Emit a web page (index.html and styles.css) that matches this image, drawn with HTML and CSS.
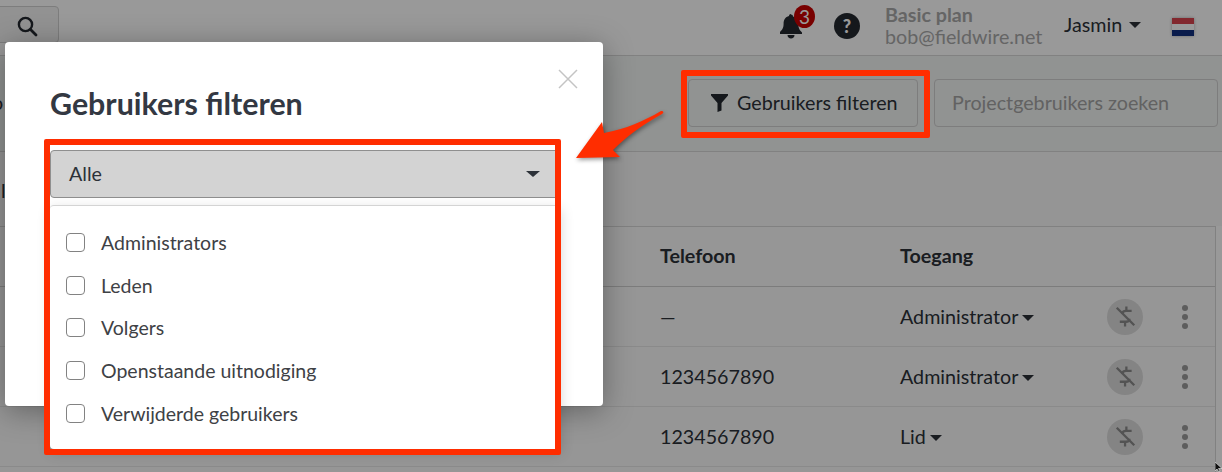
FILE: index.html
```html
<!DOCTYPE html>
<html lang="nl">
<head>
<meta charset="utf-8">
<title>Gebruikers filteren</title>
<link rel="stylesheet" href="styles.css">
</head>
<body>
<div class="page">
  <header class="topbar">
    <button class="search-btn" aria-label="Zoeken">
      <svg width="22" height="22" viewBox="0 0 22 22"><circle cx="9.5" cy="9.5" r="6.6" fill="none" stroke="#23282f" stroke-width="2.4"/><path d="M14.5 14.5 20 20" stroke="#23282f" stroke-width="2.8" stroke-linecap="round"/></svg>
    </button>
    <div class="top-right">
      <div class="bell">
        <svg width="24" height="26" viewBox="0 0 24 26"><path d="M12 1.5c1.2 0 2 .8 2 2 3.6.9 5.4 4 5.4 7.5 0 4.500 1.300 6 3.600 8.500v1.500H1V19c2.300-2.500 3.600-4 3.600-8.500 0-3.500 1.800-6.600 5.400-7.500 0-1.200.8-2 2-2Z" fill="#23282f"/><path d="M8.500 22h7c0 2-1.500 3.500-3.500 3.500S8.500 24 8.500 22Z" fill="#23282f"/></svg>
        <span class="badge">3</span>
      </div>
      <span class="help">?</span>
      <div class="plan"><strong>Basic plan</strong><span>bob@fieldwire.net</span></div>
      <div class="user">Jasmin <i class="caret"></i></div>
      <div class="flag"><i></i><i></i><i></i></div>
    </div>
  </header>
  <section class="toolbar">
    <span class="tab-edge">o</span>
    <button class="filter-btn">
      <svg width="17" height="18" viewBox="0 0 17 18"><path d="M0 0h17v1.500L10.500 9v7.500L6.500 18V9L0 1.500Z" fill="#23282f"/></svg>
      Gebruikers filteren
    </button>
    <div class="search-input">Projectgebruikers zoeken</div>
  </section>
  <div class="subhead">l</div>
  <section class="table">
    <div class="row head"><span></span><span>Telefoon</span><span>Toegang</span><span></span><span></span></div>
    <div class="row">
      <span></span><span>—</span><span class="access">Administrator<i class="caret"></i></span>
      <span class="nobill"><svg width="21" height="23" viewBox="0 0 24 26"><use href="#nodollar"/></svg></span><span class="more"><i></i><i></i><i></i></span>
    </div>
    <div class="row">
      <span></span><span>1234567890</span><span class="access">Administrator<i class="caret"></i></span>
      <span class="nobill"><svg width="21" height="23" viewBox="0 0 24 26"><use href="#nodollar"/></svg></span><span class="more"><i></i><i></i><i></i></span>
    </div>
    <div class="row">
      <span></span><span>1234567890</span><span class="access">Lid<i class="caret"></i></span>
      <span class="nobill"><svg width="21" height="23" viewBox="0 0 24 26"><use href="#nodollar"/></svg></span><span class="more"><i></i><i></i><i></i></span>
    </div>
  </section>
</div>

<svg class="defs" width="0" height="0"><defs>
  <g id="nodollar" fill="none" stroke="#8a8a8a" stroke-width="2.600">
    <path d="M2 3 22 23"/>
    <path d="M19 6.500h-6.500C10 6.500 8.500 8 8.500 10M5.500 19H12.500c2.500 0 4-1.500 4-3.500"/>
    <path d="M13 1.500v5M11.500 19v5.500"/>
  </g>
</defs></svg>

<div class="overlay"></div>

<div class="modal">
  <svg class="close" width="20" height="20" viewBox="0 0 20 20"><path d="M1 1 19 19M19 1 1 19" stroke="#c4c4c4" stroke-width="1.500"/></svg>
  <h2 class="modal-title">Gebruikers filteren</h2>
  <div class="select">
    <span>Alle</span><i class="caret"></i>
  </div>
  <ul class="menu">
    <li><i class="check"></i>Administrators</li>
    <li><i class="check"></i>Leden</li>
    <li><i class="check"></i>Volgers</li>
    <li><i class="check"></i>Openstaande uitnodiging</li>
    <li><i class="check"></i>Verwijderde gebruikers</li>
  </ul>
</div>

<div class="mark mark-button"></div>
<div class="mark mark-panel"></div>
<svg class="arrow" width="100" height="60" viewBox="570 105 100 60"><path d="M576 158 602 122l2 11c22-4 40-12 57-22 3 0 3 2 1 3-20 11-36 23-49 36l7 7Z" fill="#ff2d00"/></svg>
<svg class="cursor" width="8" height="10" viewBox="0 0 8 10"><path d="M0 0v9l2-2 2 3 1-1-1.500-2.500H7Z" fill="#111" stroke="#eee" stroke-width=".6"/></svg>
</body>
</html>
```
FILE: styles.css
```css
* { box-sizing: border-box; }
html, body { margin: 0; height: 100%; }
body {
  position: relative;
  width: 1222px;
  height: 472px;
  overflow: hidden;
  background: #fff;
  font-family: Lato, "Liberation Sans", sans-serif;
  font-size: 19.7px;
  color: #2c3138;
}
i { display: block; font-style: normal; }
button { font: inherit; color: inherit; background: none; }
.defs { position: absolute; }

.page { width: 1222px; height: 472px; display: flex; flex-direction: column; }

.topbar {
  height: 56px;
  flex: none;
  display: flex;
  align-items: flex-start;
  border-bottom: 1px solid #d8d8d8;
  background: #fff;
}
.search-btn {
  width: 60px;
  height: 37px;
  margin-top: 6px;
  margin-left: -1px;
  padding: 2px 0 0 16px;
  border: 1px solid #d0d0d0;
  border-radius: 0 4px 4px 0;
  background: #f3f3f3;
  display: flex;
  align-items: center;
}
.top-right { margin-left: auto; display: flex; align-items: flex-start; }
.bell { position: relative; width: 24px; height: 26px; margin: 13px 0 0; }
.bell svg { display: block; margin-left: -2px; }
.badge {
  position: absolute;
  left: 13px;
  top: -8px;
  width: 21px;
  height: 23px;
  border-radius: 50%;
  background: #c90000;
  color: #fff;
  font-size: 19px;
  line-height: 23px;
  text-align: center;
}
.help {
  width: 26px;
  height: 26px;
  margin: 13px 0 0 29px;
  border-radius: 50%;
  background: #23282f;
  color: #fff;
  font-size: 18px;
  font-weight: 900;
  line-height: 26px;
  text-align: center;
}
.plan {
  width: 179px;
  margin: 4px 0 0 25px;
  display: flex;
  flex-direction: column;
  color: #a9a9a9;
  line-height: 22px;
}
.plan strong { font-weight: 700; }
.user { width: 108px; margin-top: 14px; display: flex; align-items: center; gap: 7px; line-height: 22px; }
.flag { width: 22px; height: 18px; margin: 18px 28px 0 0; display: flex; flex-direction: column; box-shadow: 0 0 3px rgba(0,0,0,.3); }
.flag i { flex: 1; }
.flag i:nth-child(1) { background: #d9434e; }
.flag i:nth-child(2) { background: #fff; }
.flag i:nth-child(3) { background: #12307f; }

.caret { width: 0; height: 0; border: 6px solid transparent; border-top-color: currentColor; border-bottom-width: 0; }

.toolbar {
  height: 96px;
  flex: none;
  display: flex;
  align-items: flex-start;
  padding: 23px 4px 0 0;
  border-bottom: 1px solid #d8d8d8;
  background: #f2f5f3;
}
.tab-edge { margin: 12px 0 0 -8px; }
.filter-btn {
  width: 230px;
  height: 48px;
  margin-left: auto;
  display: flex;
  align-items: center;
  gap: 9px;
  padding: 0 0 1px 22px;
  border: 1px solid #d0d0d0;
  border-radius: 4px;
  white-space: nowrap;
}
.search-input {
  width: 284px;
  height: 48px;
  margin-left: 16px;
  padding-left: 17px;
  border: 1px solid #d0d0d0;
  border-radius: 4px;
  color: #a4a4a4;
  line-height: 45px;
}
.subhead { height: 74px; flex: none; padding: 27px 0 0 1px; background: #f8f8f8; }

.table {
  flex: 1;
  width: 1216px;
  border-top: 1px solid #d8d8d8;
  border-right: 1px solid #d8d8d8;
  background: #fbfbfb;
}
.row {
  height: 60px;
  display: grid;
  grid-template-columns: 660px 240px 186px 78px 1fr;
  align-items: center;
  border-bottom: 1px solid #e6e6e6;
}
.row.head { padding-bottom: 3px; font-weight: 700; border-bottom-color: #cfcfcf; }
.access { display: flex; align-items: center; gap: 4px; }
.access .caret { border-width: 6px 6px 0; margin-top: 2px; }
.nobill {
  width: 36px;
  height: 36px;
  margin-left: 21px;
  border-radius: 50%;
  background: #dcdcdc;
  display: flex;
  align-items: center;
  justify-content: center;
}
.more { display: flex; flex-direction: column; align-items: center; gap: 3px; width: 8px; margin-left: 17px; }
.more i { width: 6px; height: 6px; border-radius: 50%; background: #9c9c9c; }

.overlay { position: absolute; inset: 0; background: rgba(0,0,0,.4); }

.modal {
  position: absolute;
  left: 5px;
  top: 42px;
  width: 598px;
  height: 364px;
  padding: 43px 42px 0 45px;
  background: #fff;
  border-radius: 4px;
  box-shadow: 0 5px 30px rgba(0,0,0,.35);
}
.close { position: absolute; right: 25px; top: 27px; }
.modal-title { margin: 0; font-size: 30.400px; line-height: 36px; font-weight: 700; color: #333842; }
.select {
  height: 48px;
  margin-top: 29px;
  padding: 0 20px 2px 18px;
  display: flex;
  align-items: center;
  justify-content: space-between;
  background: #d3d3d3;
  border: 1px solid #8f8f8f;
  border-radius: 4px;
}
.select .caret { border-width: 6px 7px 0; margin-top: 2px; }
.menu {
  position: relative;
  height: 244px;
  margin: 7px 0 0;
  padding: 15px 0 0 16px;
  list-style: none;
  background: #fff;
  border-top: 1px solid #d4d4d4;
  border-radius: 4px;
  box-shadow: 0 4px 14px rgba(0,0,0,.16);
  color: #3e4145;
  font-size: 19.500px;
}
.menu li { height: 42.700px; display: flex; align-items: center; gap: 16px; }
.check { width: 19px; height: 19px; border: 1.500px solid #828282; border-radius: 4px; }

.mark { position: absolute; border: 6px solid #ff2d00; border-radius: 2px; pointer-events: none; }
.mark-button { left: 681px; top: 70px; width: 249px; height: 68px; }
.mark-panel { left: 44px; top: 139px; width: 517px; height: 316px; }
.arrow { position: absolute; left: 570px; top: 105px; filter: drop-shadow(1px 2px 2px rgba(0,0,0,.4)); }
.cursor { position: absolute; left: 1215px; top: 462px; }
```
